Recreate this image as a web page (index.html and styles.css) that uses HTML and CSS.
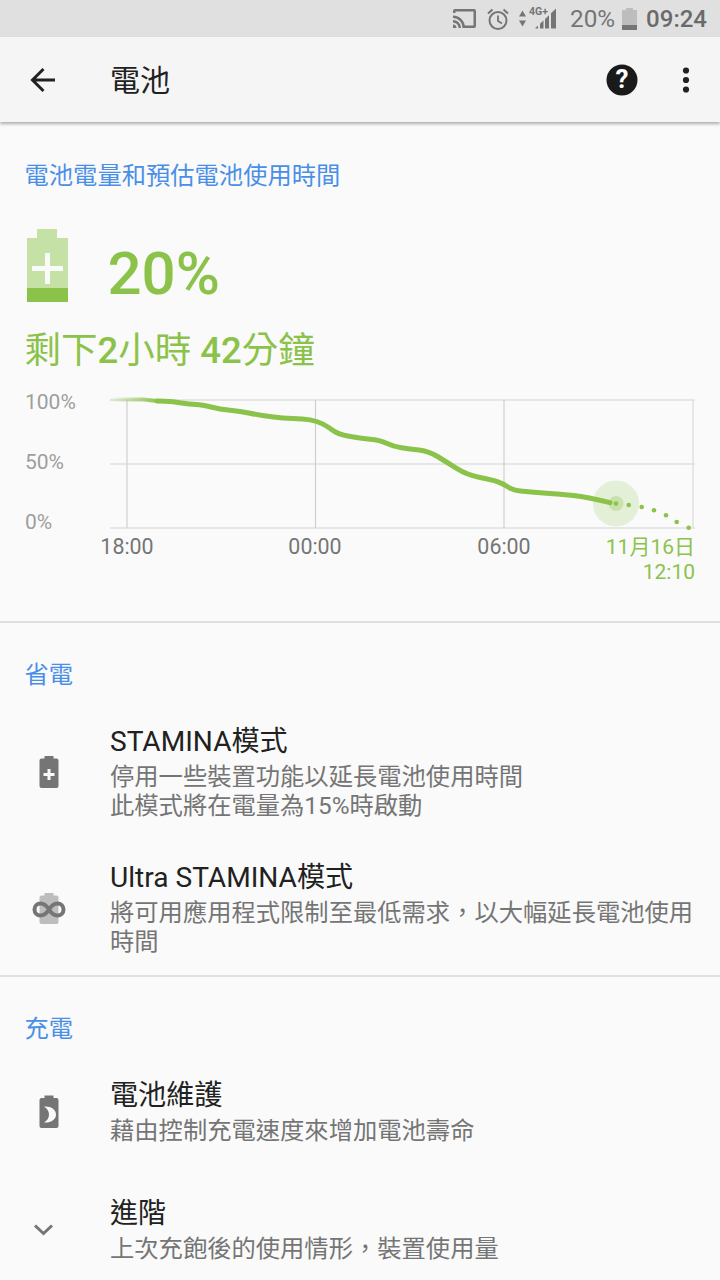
FILE: index.html
```html
<!DOCTYPE html>
<html>
<head>
    <title>電池</title>
    <meta name="viewport" content="width=device-width, initial-scale=1">
    <link rel="stylesheet" href="styles.css">
</head>
<body>
    <div class="status-bar">
        <svg class="icon-cast" width="25" height="21" viewBox="0 0 25 21">
            <path d="M1 5V3a2 2 0 0 1 2-2h19a2 2 0 0 1 2 2v15a2 2 0 0 1-2 2H12v-2.500h9.500V3.500h-18V5z" fill="#757575"/>
            <path d="M1 7.500a12 12 0 0 1 12 12.500h-2.500a9.500 9.500 0 0 0-9.500-10zM1 12a8 8 0 0 1 8 8H6.500A5.500 5.500 0 0 0 1 14.500zM1 16.500a3.500 3.500 0 0 1 3.500 3.500H1z" fill="#757575"/>
        </svg>
        <svg class="icon-alarm" width="24" height="24" viewBox="0 0 24 24">
            <circle cx="12" cy="13.500" r="8.500" fill="none" stroke="#757575" stroke-width="2"/>
            <path d="M12 8.500v5.500l4 2.500" fill="none" stroke="#757575" stroke-width="1.800"/>
            <path d="M2 6.500l4.500-4M22 6.500l-4.500-4" fill="none" stroke="#757575" stroke-width="2"/>
        </svg>
        <svg class="icon-network" width="38" height="30" viewBox="0 -3 38 30">
            <path d="M3.500 3.500l3.500 6H0zM3.500 19.500l3.500-6H0z" fill="#757575"/>
            <path d="M16 21.500h3v-3zM21 21.500h3.500v-8l-3.500 3.300zM26 21.500h4V8.200l-4 3.800zM32 21.500h5v-20l-5 4.800z" fill="#757575"/>
            <text x="10" y="8" class="network-label">4G+</text>
        </svg>
        <span class="status-percent">20%</span>
        <svg class="icon-battery" width="15" height="22" viewBox="0 0 15 22">
            <path d="M4 0h7v2h4v20H0V2h4z" fill="#bdbdbd"/>
            <rect y="17" width="15" height="5" fill="#757575"/>
        </svg>
        <span class="status-time">09:24</span>
    </div>

    <div class="toolbar">
        <svg class="icon-back" width="28" height="28" viewBox="0 0 28 28">
            <path d="M26 14H4M14.500 3L3.500 14l11 11" fill="none" stroke="#212121" stroke-width="3"/>
        </svg>
        <h1 class="toolbar-title">電池</h1>
        <svg class="icon-help" width="32" height="32" viewBox="0 0 32 32">
            <circle cx="16" cy="16" r="15.500" fill="#1a1a1a"/>
            <text x="16" y="24" class="help-mark">?</text>
        </svg>
        <svg class="icon-more" width="8" height="26" viewBox="0 0 8 26">
            <circle cx="4" cy="3.500" r="3.100" fill="#212121"/>
            <circle cx="4" cy="13" r="3.100" fill="#212121"/>
            <circle cx="4" cy="22.500" r="3.100" fill="#212121"/>
        </svg>
    </div>

    <section class="summary">
        <h2 class="section-title">電池電量和預估電池使用時間</h2>
        <div class="level">
            <svg class="level-icon" width="41" height="73" viewBox="0 0 41 73">
                <path d="M10 0h20v9h11v64H0V9h10z" fill="#c5e1a5"/>
                <rect y="59" width="41" height="14" fill="#8bc34a"/>
                <path d="M5 39.500h31M20.500 24v31" stroke="#fafafa" stroke-width="5" fill="none"/>
            </svg>
            <div class="level-value">20%</div>
        </div>
        <div class="remaining">剩下<b>2</b>小時 <b>42</b>分鐘</div>

        <svg class="chart" width="720" height="210" viewBox="0 380 720 210">
            <defs>
                <linearGradient id="fadeIn" gradientUnits="userSpaceOnUse" x1="108" y1="0" x2="160" y2="0">
                    <stop offset="0" stop-color="#8bc34a" stop-opacity="0"/>
                    <stop offset="1" stop-color="#8bc34a"/>
                </linearGradient>
            </defs>
            <path class="grid-h" d="M110 400H695M110 464H695M110 528H695"/>
            <path class="grid-v" d="M127 400V528M315.500 400V528M504 400V528"/>
            <path class="grid-h" d="M693 400V528"/>
            <path class="curve-start" d="M110 399.500L143 399.500L157 401"/>
            <path class="curve" d="M157 401L165 401.300Q173 401.700 181.500 402.900Q190 404 196 404.400Q202 404.700 211 407Q220 409.300 230 410.200Q240 411 250 413.200Q260 415.300 271.500 416.800Q283 418.300 293 418.500Q303 418.700 310 419.900Q317 421 322.500 423.900Q328 426.700 333 430.500Q338 434.300 349 436.300Q360 438.300 370 439.200Q380 440 386.500 443.200Q393 446.300 401.500 447.700Q410 449 419 449.900Q428 450.700 437.500 456.500Q447 462.300 457 468.700Q467 475 480 477.500Q493 480 498 481.900Q503 483.700 508 487Q513 490.300 523 491.300Q533 492.300 546.500 493.200Q560 494 573.500 495.400Q587 496.700 610 502.700"/>
            <circle cx="616" cy="503.500" r="23" fill="#8bc34a" opacity="0.2"/>
            <circle cx="616" cy="503.500" r="7.500" fill="#8bc34a" opacity="0.3"/>
            <g fill="#8bc34a">
                <circle cx="616" cy="503.500" r="2.300"/>
                <circle cx="628.700" cy="505" r="2.300"/>
                <circle cx="641.700" cy="507" r="2.300"/>
                <circle cx="654" cy="510.300" r="2.300"/>
                <circle cx="666" cy="515.300" r="2.300"/>
                <circle cx="676.700" cy="522" r="2.300"/>
                <circle cx="688.700" cy="527.700" r="2.300"/>
            </g>
            <text class="axis-y" x="25" y="409">100%</text>
            <text class="axis-y" x="25" y="469">50%</text>
            <text class="axis-y" x="25" y="529">0%</text>
            <text class="axis-x" x="127" y="554">18:00</text>
            <text class="axis-x" x="315" y="554">00:00</text>
            <text class="axis-x" x="504" y="554">06:00</text>
            <text class="axis-end" x="695" y="554">11月16日</text>
            <text class="axis-end" x="695" y="579">12:10</text>
        </svg>
    </section>

    <section class="group">
        <h2 class="section-title">省電</h2>
        <div class="item">
            <svg class="item-icon" width="48" height="48" viewBox="0 0 48 48">
                <path d="M19.500 8h9v2.500h3a2 2 0 0 1 2 2V38a2 2 0 0 1-2 2h-15a2 2 0 0 1-2-2V12.500a2 2 0 0 1 2-2h3z" fill="#757575"/>
                <path d="M18.500 26.500h11M24 21v11" stroke="#fafafa" stroke-width="3" fill="none"/>
            </svg>
            <div class="item-text">
                <div class="item-title">STAMINA模式</div>
                <div class="item-sub">停用一些裝置功能以延長電池使用時間<br>此模式將在電量為15%時啟動</div>
            </div>
        </div>
        <div class="item">
            <svg class="item-icon" width="48" height="48" viewBox="0 0 48 48">
                <path d="M19.500 9h9v2.500h3a2 2 0 0 1 2 2V38a2 2 0 0 1-2 2h-15a2 2 0 0 1-2-2V13.500a2 2 0 0 1 2-2h3z" fill="#bdbdbd"/>
                <path d="M24 25.500C21.500 21.500 18.500 19.500 15.500 19.500A6 6 0 0 0 15.500 31.500C18.500 31.500 21.500 29.500 24 25.500C26.500 21.500 29.500 19.500 32.500 19.500A6 6 0 0 1 32.500 31.500C29.500 31.500 26.500 29.500 24 25.500Z" fill="none" stroke="#757575" stroke-width="4"/>
            </svg>
            <div class="item-text">
                <div class="item-title">Ultra STAMINA模式</div>
                <div class="item-sub">將可用應用程式限制至最低需求，以大幅延長電池使用時間</div>
            </div>
        </div>
    </section>

    <section class="group group-charge">
        <h2 class="section-title">充電</h2>
        <div class="item item-short">
            <svg class="item-icon" width="48" height="48" viewBox="0 0 48 48">
                <g transform="translate(0 1)">
                    <path d="M19.500 7.500h9V10h3a2 2 0 0 1 2 2v26a2 2 0 0 1-2 2h-15a2 2 0 0 1-2-2V12a2 2 0 0 1 2-2h3z" fill="#757575"/>
                    <path d="M19 18.500C26 18 31 21.500 31 26.500C31 31.500 26 35 19 34.500C22.500 32.500 24 29.500 24 26.500C24 23.500 22.500 20.500 19 18.500Z" fill="#fafafa"/>
                </g>
            </svg>
            <div class="item-text">
                <div class="item-title">電池維護</div>
                <div class="item-sub">藉由控制充電速度來增加電池壽命</div>
            </div>
        </div>
        <div class="item item-short">
            <svg class="item-icon" width="48" height="48" viewBox="0 0 48 48">
                <path d="M10 20.500L18.500 28.500L27 20.500" fill="none" stroke="#757575" stroke-width="3"/>
            </svg>
            <div class="item-text">
                <div class="item-title">進階</div>
                <div class="item-sub">上次充飽後的使用情形，裝置使用量</div>
            </div>
        </div>
    </section>
</body>
</html>
```

FILE: styles.css
```css
html, body {
    height: 1280px;
    overflow: hidden;
}
body {
    margin: 0;
    background-color: #fafafa;
    color: #212121;
    font-family: Roboto, "Noto Sans CJK TC", sans-serif;
}
h1, h2 {
    margin: 0;
    font-weight: normal;
}
svg {
    display: block;
    flex: none;
}

.status-bar {
    display: flex;
    align-items: center;
    height: 37px;
    padding-right: 13px;
    background-color: #e0e0e0;
    color: #757575;
    box-sizing: border-box;
}
.icon-cast {
    margin-left: auto;
    margin-right: 9px;
}
.icon-alarm {
    margin-right: 9px;
}
.icon-network {
    margin-right: 13px;
}
.network-label {
    font-size: 10.5px;
    font-weight: 700;
    fill: #757575;
}
.status-percent {
    font-size: 24.3px;
    margin-right: 7px;
}
.icon-battery {
    margin-right: 9px;
}
.status-time {
    font-size: 24px;
    font-weight: 500;
    color: #6a6a6a;
}

.toolbar {
    display: flex;
    align-items: center;
    height: 85px;
    padding-left: 29px;
    background-color: #f5f5f5;
    box-shadow: 0 2px 3px rgba(0, 0, 0, 0.3);
    position: relative;
}
.toolbar-title {
    flex: 1;
    margin-left: 53px;
    padding-bottom: 3px;
    font-size: 30px;
}
.help-mark {
    font-size: 26px;
    font-weight: 700;
    fill: #fff;
    text-anchor: middle;
}
.icon-help {
    margin-right: 44px;
}
.icon-more {
    margin-right: 30px;
}

.section-title {
    height: 32px;
    padding-left: 24.5px;
    font-size: 24.3px;
    line-height: 32px;
    color: #4a8fe7;
}

.summary {
    padding-top: 38px;
    height: 461px;
    border-bottom: 2px solid #e0e0e0;
    box-sizing: content-box;
}
.level {
    display: flex;
    align-items: flex-start;
    margin-top: 37px;
    padding-left: 27px;
}
.level-value {
    margin-top: 16px;
    margin-left: 39.5px;
    font-size: 60px;
    font-weight: 500;
    line-height: 57px;
    color: #8bc34a;
}
.remaining {
    margin-top: 27px;
    padding-left: 24.5px;
    font-size: 36.5px;
    line-height: 44px;
    color: #8bc34a;
}
.remaining b {
    font-weight: 500;
}
.chart {
    margin-top: 7px;
}
.grid-h {
    fill: none;
    stroke: #e0e0e0;
    stroke-width: 1.5;
}
.grid-v {
    fill: none;
    stroke: #d0d0d0;
    stroke-width: 1.2;
}
.curve {
    fill: none;
    stroke: #8bc34a;
    stroke-width: 5;
    stroke-linejoin: round;
    stroke-linecap: round;
}
.curve-start {
    fill: none;
    stroke: url(#fadeIn);
    stroke-width: 4;
}
.axis-y {
    font-size: 21px;
    fill: #9e9e9e;
}
.axis-x {
    font-size: 21.4px;
    fill: #757575;
    text-anchor: middle;
}
.axis-end {
    font-size: 21px;
    fill: #8bc34a;
    text-anchor: end;
}

.group {
    padding-top: 36px;
    border-bottom: 2px solid #e0e0e0;
}
.group .section-title {
    margin-bottom: 12px;
}
.group-charge {
    border-bottom: none;
}
.item {
    display: flex;
    align-items: center;
    padding: 20px 0 19px;
}
.item-short + .item-short {
    margin-top: 11px;
}
.item-icon {
    margin-left: 24.5px;
    margin-right: 37.5px;
}
.item-text {
    flex: 1;
    padding-right: 24px;
}
.item-title {
    font-size: 28.1px;
    line-height: 37px;
}
.item-sub {
    margin-top: 2px;
    font-size: 24.3px;
    line-height: 29px;
    color: #757575;
}
```
